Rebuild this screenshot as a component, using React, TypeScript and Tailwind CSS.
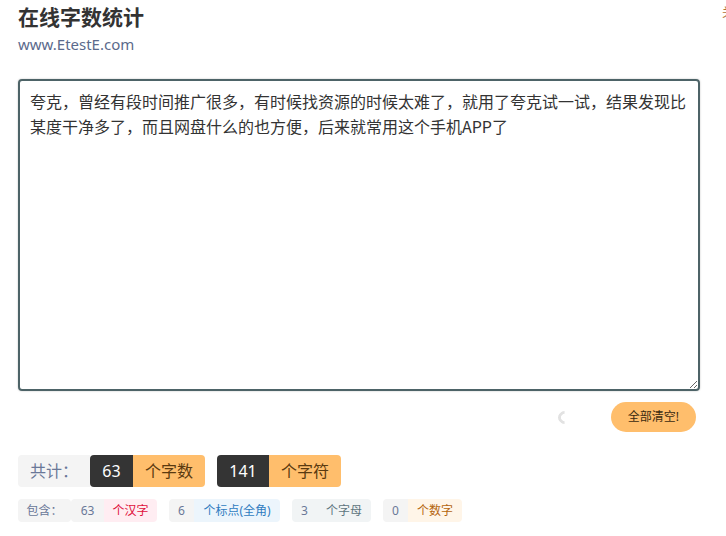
import { useState } from 'react'

const initial =
  '夸克，曾经有段时间推广很多，有时候找资源的时候太难了，就用了夸克试一试，结果发现比某度干净多了，而且网盘什么的也方便，后来就常用这个手机APP了'

export default function App() {
  const [text, setText] = useState(initial)

  return (
    <div
      className="relative w-[726px] h-[536px] overflow-hidden bg-white text-[#333]"
      style={{ fontFamily: '"Noto Sans", "Noto Sans CJK SC", sans-serif' }}
    >
      <span className="absolute right-[-8px] top-[4px] text-[12px] text-[#b0703a]">关</span>

      {/* Header */}
      <div className="px-[18px] pt-[1px]">
        <h1 className="text-[21px] leading-[32px] font-bold text-[#333]">在线字数统计</h1>
        <p className="text-[15px] leading-[20px] text-[#5b6a8c] mt-[1px]">www.EtestE.com</p>
      </div>

      {/* Editor */}
      <div className="px-[18px] mt-[25px]">
        <textarea
          value={text}
          onChange={e => setText(e.target.value)}
          className="block w-[682px] h-[312px] border-2 border-[#4d6367] rounded-[4px] shadow-[0_0_2px_rgba(0,0,0,0.25)] pl-[10px] pr-[6px] pt-[8px] pb-[10px] text-[16px] leading-[25px] text-[#333] outline-none"
          style={{ fontFamily: '"Noto Sans CJK SC", sans-serif' }}
        />
      </div>

      {/* Actions */}
      <div className="flex items-center justify-end gap-[40px] pr-[30px] mt-[11px]">
        <div className="w-[13px] h-[13px] rounded-full border-[3px] border-transparent border-l-[#e2e2e2] border-b-[#e2e2e2] rotate-45" />
        <button className="h-[30px] px-[17px] rounded-full bg-[#ffbe6c] text-[12px] text-[#3a2a10]">全部清空!</button>
      </div>

      {/* Totals */}
      <div className="flex items-center gap-[12px] px-[18px] mt-[23px]">
        <div className="flex h-[32px] text-[16px]">
          <span className="flex items-center px-[12px] bg-[#f4f4f4] text-[#6a7898] rounded-l-[4px] w-[72px]">共计：</span>
          <span className="flex items-center justify-center w-[43px] bg-[#343434] text-white rounded-l-[4px]">63</span>
          <span className="flex items-center justify-center w-[72px] bg-[#ffbe6c] text-[#5a3a10] rounded-r-[4px]">个字数</span>
        </div>
        <div className="flex h-[32px] text-[16px]">
          <span className="flex items-center justify-center w-[52px] bg-[#343434] text-white rounded-l-[4px]">141</span>
          <span className="flex items-center justify-center w-[72px] bg-[#ffbe6c] text-[#5a3a10] rounded-r-[4px]">个字符</span>
        </div>
      </div>

      {/* Breakdown */}
      <div className="flex items-center gap-[12px] px-[18px] mt-[12px] text-[12px]">
        <div className="flex h-[23px]">
          <span className="flex items-center justify-center w-[53px] bg-[#f4f4f4] text-[#6a7898] rounded-[4px]">包含：</span>
          <span className="flex items-center justify-center w-[33px] bg-[#f4f4f4] text-[#6a7898] rounded-l-[4px]">63</span>
          <span className="flex items-center justify-center w-[53px] bg-[#ffedf2] text-[#e0103c] rounded-r-[4px]">个汉字</span>
        </div>
        <div className="flex h-[23px]">
          <span className="flex items-center justify-center w-[25px] bg-[#f4f4f4] text-[#6a7898] rounded-l-[4px]">6</span>
          <span className="flex items-center justify-center w-[86px] bg-[#ecf5fc] text-[#2f7cc0] rounded-r-[4px]">个标点(全角)</span>
        </div>
        <div className="flex h-[23px]">
          <span className="flex items-center justify-center w-[25px] bg-[#f1f4f5] text-[#6a7898] rounded-l-[4px]">3</span>
          <span className="flex items-center justify-center w-[54px] bg-[#f1f4f5] text-[#5e7480] rounded-r-[4px]">个字母</span>
        </div>
        <div className="flex h-[23px]">
          <span className="flex items-center justify-center w-[25px] bg-[#f4f4f4] text-[#6a7898] rounded-l-[4px]">0</span>
          <span className="flex items-center justify-center w-[54px] bg-[#fff5e8] text-[#b5650e] rounded-r-[4px]">个数字</span>
        </div>
      </div>
    </div>
  )
}
